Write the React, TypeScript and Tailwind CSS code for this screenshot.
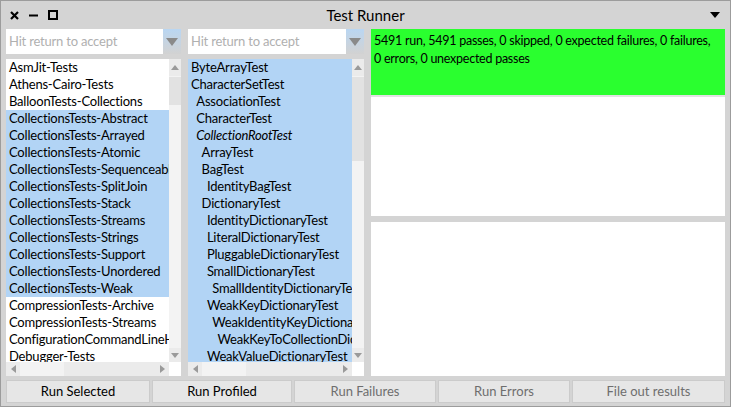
import React from 'react';

const font = { fontFamily: '"Lato", "Noto Sans", sans-serif' };

const packages = [
  { name: 'AsmJit-Tests', sel: false },
  { name: 'Athens-Cairo-Tests', sel: false },
  { name: 'BalloonTests-Collections', sel: false },
  { name: 'CollectionsTests-Abstract', sel: true },
  { name: 'CollectionsTests-Arrayed', sel: true },
  { name: 'CollectionsTests-Atomic', sel: true },
  { name: 'CollectionsTests-Sequenceable', sel: true },
  { name: 'CollectionsTests-SplitJoin', sel: true },
  { name: 'CollectionsTests-Stack', sel: true },
  { name: 'CollectionsTests-Streams', sel: true },
  { name: 'CollectionsTests-Strings', sel: true },
  { name: 'CollectionsTests-Support', sel: true },
  { name: 'CollectionsTests-Unordered', sel: true },
  { name: 'CollectionsTests-Weak', sel: true },
  { name: 'CompressionTests-Archive', sel: false },
  { name: 'CompressionTests-Streams', sel: false },
  { name: 'ConfigurationCommandLineHandler-Tests', sel: false },
  { name: 'Debugger-Tests', sel: false },
];

const classes: [string, number, boolean?][] = [
  ['ByteArrayTest', 0],
  ['CharacterSetTest', 0],
  ['AssociationTest', 1],
  ['CharacterTest', 1],
  ['CollectionRootTest', 1, true],
  ['ArrayTest', 2],
  ['BagTest', 2],
  ['IdentityBagTest', 3],
  ['DictionaryTest', 2],
  ['IdentityDictionaryTest', 3],
  ['LiteralDictionaryTest', 3],
  ['PluggableDictionaryTest', 3],
  ['SmallDictionaryTest', 3],
  ['SmallIdentityDictionaryTest', 4],
  ['WeakKeyDictionaryTest', 3],
  ['WeakIdentityKeyDictionaryTest', 4],
  ['WeakKeyToCollectionDictionaryTest', 5],
  ['WeakValueDictionaryTest', 3],
];

function Tri({ dir }: { dir: 'up' | 'down' | 'left' | 'right' }) {
  const pts = {
    up: '0,5 8,5 4,0',
    down: '0,0 8,0 4,5',
    left: '5,0 5,8 0,4',
    right: '0,0 0,8 5,4',
  }[dir];
  const vertical = dir === 'up' || dir === 'down';
  return (
    <svg width={vertical ? 8 : 5} height={vertical ? 5 : 8}>
      <polygon points={pts} fill="#9a9a9a" />
    </svg>
  );
}

function Filter() {
  return (
    <div className="flex h-[25px]">
      <div className="flex-1 bg-white flex items-center pl-[3px] text-[13px] tracking-[-0.2px] text-[#b0b0b0]">
        Hit return to accept
      </div>
      <div className="w-[18px] flex items-center justify-center bg-gradient-to-b from-[#b9d6f2] to-[#d2d2d2]">
        <svg width="12" height="8">
          <polygon points="0,0 12,0 6,8" fill="#8a8a8a" />
        </svg>
      </div>
    </div>
  );
}

function VScroll({ thumbTop, thumbH }: { thumbTop: number; thumbH: number }) {
  return (
    <div className="w-[12px] bg-[#f3f3f3] flex flex-col">
      <div className="h-[17px] bg-[#ebebeb] flex items-center justify-center">
        <Tri dir="up" />
      </div>
      <div className="flex-1 flex flex-col">
        <div style={{ height: thumbTop }} />
        <div className="bg-[#e2e2e2]" style={{ height: thumbH }} />
      </div>
      <div className="h-[14px] bg-[#ebebeb] flex items-center justify-center">
        <Tri dir="down" />
      </div>
    </div>
  );
}

function HScroll() {
  return (
    <div className="h-[14px] flex">
      <div className="flex-1 flex bg-[#ebebeb] items-center">
        <div className="w-[14px] flex justify-center">
          <Tri dir="left" />
        </div>
        <div className="w-[44px] h-full bg-[#f3f3f3]" />
        <div className="flex-1" />
        <div className="w-[14px] flex justify-center">
          <Tri dir="right" />
        </div>
      </div>
      <div className="w-[12px] bg-white" />
    </div>
  );
}

export default function App() {
  return (
    <div
      className="w-[731px] h-[407px] bg-[#d4d4d4] border border-[#9c9c9c] flex flex-col text-black"
      style={font}
    >
      <div className="h-[28px] flex items-center px-[9px]">
        <div className="w-[60px] flex items-center gap-[10px]">
          <svg width="9" height="9">
            <path d="M1 1 L8 8 M8 1 L1 8" stroke="#000" strokeWidth="2.2" />
          </svg>
          <svg width="9" height="9">
            <path d="M0 4.5 H9" stroke="#000" strokeWidth="2" />
          </svg>
          <svg width="10" height="10">
            <rect x="1" y="1" width="8" height="8" fill="none" stroke="#000" strokeWidth="2" />
          </svg>
        </div>
        <div className="flex-1 text-center text-[15px]">Test Runner</div>
        <div className="w-[60px] flex justify-end">
          <svg width="10" height="6" className="mr-[1px]">
            <polygon points="0,0 10,0 5,6" fill="#000" />
          </svg>
        </div>
      </div>

      <div className="flex-1 flex px-[5px] gap-[7px] min-h-0">
        <div className="w-[175px] flex flex-col gap-[5px]">
          <Filter />
          <div className="flex-1 flex flex-col min-h-0">
            <div className="flex-1 flex min-h-0">
              <div className="flex-1 bg-white overflow-hidden">
                {packages.map((p) => (
                  <div
                    key={p.name}
                    className={`h-[17px] leading-[17px] pl-[3px] text-[13px] tracking-[-0.2px] whitespace-nowrap overflow-hidden ${p.sel ? 'bg-[#b2d4f5]' : ''}`}
                  >
                    {p.name}
                  </div>
                ))}
              </div>
              <VScroll thumbTop={1} thumbH={28} />
            </div>
            <HScroll />
          </div>
        </div>

        <div className="w-[176px] flex flex-col gap-[5px]">
          <Filter />
          <div className="flex-1 flex flex-col min-h-0">
            <div className="flex-1 flex min-h-0">
              <div className="flex-1 bg-[#b2d4f5] overflow-hidden">
                {classes.map(([name, level, italic]) => (
                  <div
                    key={name}
                    className={`h-[17px] leading-[17px] text-[13px] tracking-[-0.2px] whitespace-nowrap overflow-hidden ${italic ? 'italic' : ''}`}
                    style={{ paddingLeft: 3 + level * 5.3 }}
                  >
                    {name}
                  </div>
                ))}
              </div>
              <VScroll thumbTop={1} thumbH={84} />
            </div>
            <HScroll />
          </div>
        </div>

        <div className="flex-1 flex flex-col">
          <div className="h-[66px] bg-[#2aff2f] px-[3px] pt-[3px] text-[12.5px] tracking-[-0.25px] leading-[18px]">
            5491 run, 5491 passes, 0 skipped, 0 expected failures, 0 failures,
            <br />
            0 errors, 0 unexpected passes
          </div>
          <div className="h-[121px] bg-white border-t-2 border-[#e2e2e2]" />
          <div className="flex-1 bg-white mt-[6px]" />
        </div>
      </div>

      <div className="h-[30px] flex px-[5px] pt-[4px] pb-[3px] gap-[2px] text-[13px]">
        <button className="w-[144px] bg-[#e6e6e6] border border-[#cbcbcb]">Run Selected</button>
        <button className="w-[140px] bg-[#e6e6e6] border border-[#cbcbcb]">Run Profiled</button>
        <button className="w-[142px] bg-[#e6e6e6] border border-[#cbcbcb] text-[#6e6e6e]">Run Failures</button>
        <button className="w-[132px] bg-[#e6e6e6] border border-[#cbcbcb] text-[#6e6e6e]">Run Errors</button>
        <button className="flex-1 bg-[#e6e6e6] border border-[#cbcbcb] text-[#6e6e6e]">File out results</button>
      </div>
    </div>
  );
}
